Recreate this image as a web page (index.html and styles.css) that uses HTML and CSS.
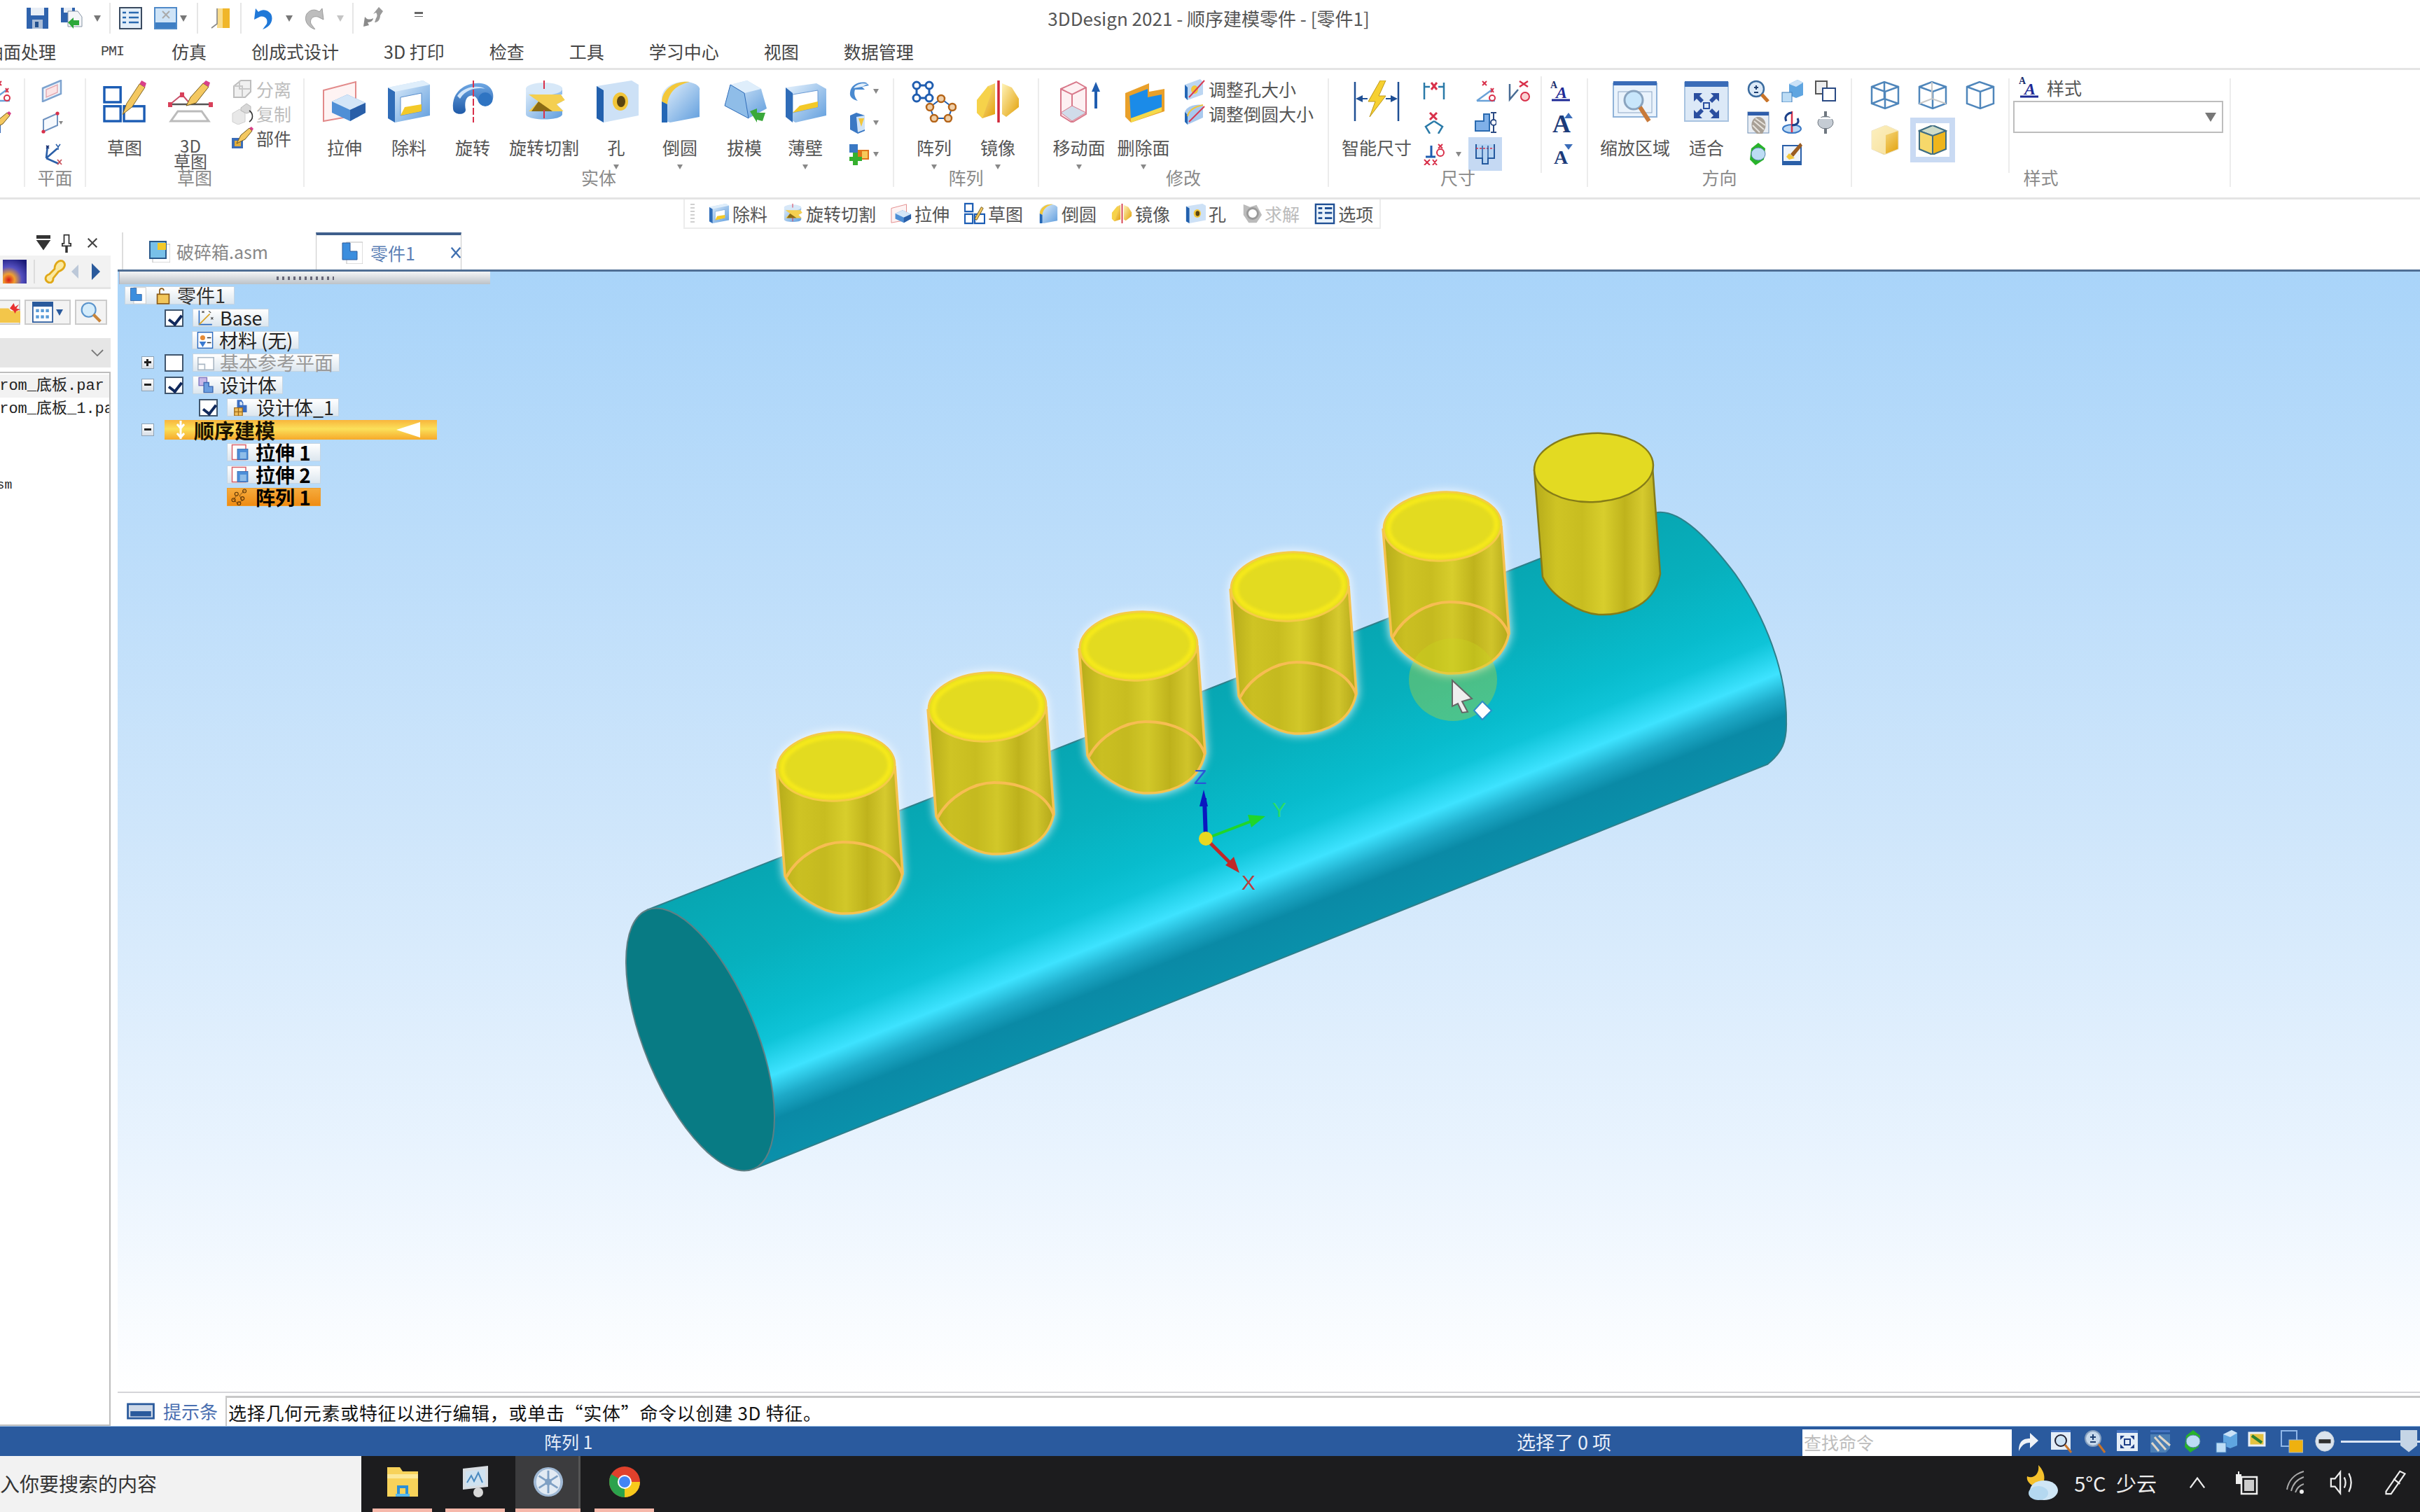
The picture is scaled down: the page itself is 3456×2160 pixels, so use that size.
FILE: index.html
```html
<!DOCTYPE html>
<html lang="zh-CN">
<head>
<meta charset="utf-8">
<title>3DDesign 2021</title>
<link rel="stylesheet" href="styles.css">
</head>
<body>
<svg class="sprite" aria-hidden="true">
<defs>
<linearGradient id="gb" x1="0" y1="0" x2="1" y2="1"><stop offset="0" stop-color="#e8f3fd"/><stop offset="1" stop-color="#5f9ddd"/></linearGradient>
<linearGradient id="gb2" x1="0" y1="0" x2="0" y2="1"><stop offset="0" stop-color="#6fa8e4"/><stop offset="1" stop-color="#1f5aa8"/></linearGradient>
<linearGradient id="gg" x1="0" y1="0" x2="1" y2="1"><stop offset="0" stop-color="#fff3b8"/><stop offset="1" stop-color="#e2a008"/></linearGradient>
<symbol id="i-sketch" viewBox="0 0 64 62"><g fill="none" stroke="#1b5cb4" stroke-width="3.5"><rect x="2" y="10" width="24" height="22"/><rect x="2" y="38" width="24" height="22"/><rect x="31" y="38" width="30" height="22"/></g><path d="M29 50 35 34 54 5 62 10 43 39z" fill="#f4c860" stroke="#7e621e"/><path d="M54 5 57 0 64 4 62 10z" fill="#d8408a"/></symbol>
<symbol id="i-sk3d" viewBox="0 0 64 60"><path d="M3 34 20 20 32 34z" fill="none" stroke="#c8506a" stroke-width="2"/><g fill="#d8405a"><rect x="0" y="31" width="6" height="7"/><rect x="17" y="17" width="6" height="7"/><rect x="58" y="31" width="6" height="7"/></g><path d="M6 34H58" stroke="#555" stroke-width="2.5"/><path d="M14 44H48L58 58H4z" fill="none" stroke="#bbb" stroke-width="3"/><path d="M26 36 32 24 50 4 58 9 40 32z" fill="#f4c860" stroke="#6e561a"/><path d="M50 4 54 0 60 3 58 9z" fill="#d8408a"/></symbol>
<symbol id="i-extrude" viewBox="0 0 64 60"><path d="M2 14 48 2V50L2 58z" fill="#fde8e8" fill-opacity=".5" stroke="#e28a8a" stroke-width="2"/><path d="M14 30 36 20 62 32V46L40 58 14 46z" fill="#4f8fd6"/><path d="M14 30 36 20 62 32 40 42z" fill="#d4e6f8"/><path d="M40 42 62 32V46L40 58z" fill="#2a5fa8"/></symbol>
<symbol id="i-cut" viewBox="0 0 64 60"><path d="M2 10 52 0 62 6V50L12 60 2 54z" fill="url(#gb)"/><path d="M2 10 12 16V60L2 54z" fill="#2f6cb8"/><path d="M12 16 62 6 52 0 2 10z" fill="#dfeefb"/><path d="M20 24 50 18V44L20 50z" fill="#fff" stroke="#5a8ecb"/><path d="M20 50 26 38 50 34V44z" fill="#f3c928"/></symbol>
<symbol id="i-rev" viewBox="0 0 64 60"><path d="M4 40C2 14 24 2 44 4 60 6 64 20 60 30 56 38 44 38 40 30 38 24 34 20 28 22 22 24 20 32 22 42 22 50 4 50 4 40z" fill="url(#gb2)"/><path d="M10 22C20 8 40 6 50 12 42 10 24 10 14 26z" fill="#d3e6fa"/><ellipse cx="50" cy="27" rx="10" ry="10" fill="#2f74c2"/><path d="M33 0V60" stroke="#d8304a" stroke-width="2" stroke-dasharray="10 3"/></symbol>
<symbol id="i-revcut" viewBox="0 0 64 60"><path d="M6 12C6 2 58 2 58 12V48C58 58 6 58 6 48z" fill="url(#gb)"/><ellipse cx="32" cy="12" rx="26" ry="9" fill="#d7e8f8"/><path d="M10 20H56L62 28 50 34 60 44H10L24 30z" fill="#f4cf50"/><path d="M24 30 44 44H14z" fill="#8a6b14"/><path d="M56 20 62 28 50 34 60 44H64V20z" fill="#fff"/><path d="M32 0V60" stroke="#d8304a" stroke-width="2" stroke-dasharray="12 30"/></symbol>
<symbol id="i-hole" viewBox="0 0 64 60"><path d="M4 8 54 0 64 6V50L14 60 4 54z" fill="#cde1f6"/><path d="M4 8 14 14V60L4 54z" fill="#2260ad"/><ellipse cx="38" cy="30" rx="11" ry="13" fill="#f2c63a"/><ellipse cx="39" cy="30" rx="6" ry="8" fill="#5a4410"/></symbol>
<symbol id="i-round" viewBox="0 0 64 60"><path d="M6 56V24C8 6 30 0 44 2 56 4 62 10 60 14V52L18 60z" fill="url(#gb)"/><path d="M6 30C8 8 30 0 46 2 28 6 16 16 14 34z" fill="#f3c83a"/><path d="M6 30 14 34V60H6z" fill="#2467b5"/></symbol>
<symbol id="i-draft" viewBox="0 0 64 60"><path d="M12 6 36 0 56 12 64 40 38 54 4 36z" fill="url(#gb)"/><path d="M12 6 36 0 56 12 32 18z" fill="#dfeefb"/><path d="M12 6 32 18 38 54 4 36z" fill="#8fbde8" stroke="#2f6cb8"/><path d="M40 44 50 40 50 46 62 46 58 58 50 56 50 60z" fill="#3aa83a"/></symbol>
<symbol id="i-thin" viewBox="0 0 64 60"><path d="M4 10 48 4 62 12V50L18 60 4 52z" fill="url(#gb)"/><path d="M14 20 50 14V38L14 46z" fill="#fff" stroke="#6a9ad4"/><path d="M14 46 24 36 50 30V38z" fill="#f3c928"/><path d="M4 10 14 18V60L4 52z" fill="#2f6cb8"/></symbol>
<symbol id="i-pattern" viewBox="0 0 64 60"><g fill="none" stroke="#1f5db0" stroke-width="3"><circle cx="7" cy="7" r="5"/><circle cx="25" cy="7" r="5"/><circle cx="7" cy="25" r="5"/><circle cx="25" cy="25" r="5"/><path d="M12 7H20M12 25H20M7 12V20M25 12V20"/></g><path d="M42 26 58 38 52 54H32L26 38z" fill="none" stroke="#1f5db0" stroke-width="2"/><g fill="#f0cfa8" stroke="#b46418" stroke-width="2.5"><circle cx="42" cy="26" r="5"/><circle cx="58" cy="38" r="5"/><circle cx="52" cy="54" r="5"/><circle cx="32" cy="54" r="5"/><circle cx="26" cy="38" r="5"/></g></symbol>
<symbol id="i-mirror" viewBox="0 0 64 60"><path d="M2 28 18 8 28 4V48L10 54 2 46z" fill="url(#gg)"/><path d="M38 4 52 10 62 26V38L44 52 38 48z" fill="url(#gg)"/><path d="M2 28 18 8 24 14 10 54 2 46z" fill="#f6d24a"/><path d="M33 0V60" stroke="#d02838" stroke-width="3.5"/></symbol>
<symbol id="i-moveface" viewBox="0 0 64 60"><path d="M6 12 28 2 42 10V48L22 60 6 50z" fill="#fdf0f2" stroke="#d8788a" stroke-width="2"/><path d="M6 12 22 20 42 10M22 20V60" fill="none" stroke="#d8788a" stroke-width="2"/><path d="M6 46 22 36 42 46 22 58z" fill="#d0dcea" stroke="#d8788a"/><path d="M56 2 62 16H58V40H54V16H50z" fill="#1f5db0"/></symbol>
<symbol id="i-delface" viewBox="0 0 64 60"><path d="M6 18 40 4V16L62 12V44L14 60 6 52z" fill="#e9a02a"/><path d="M12 22 38 12V24L58 20V40L14 54z" fill="#1b8be8"/><path d="M14 54 58 38V44L14 60z" fill="#f5d94a"/></symbol>
<symbol id="i-smart" viewBox="0 0 66 60"><path d="M2 2V58M64 2V58" stroke="#1f4f94" stroke-width="2.5"/><path d="M3 26 13 21V31zM63 26 53 21V31z" fill="#1f4f94"/><path d="M13 26H20M46 26H53" stroke="#1f4f94" stroke-width="2"/><path d="M38 0 21 30H31L23 52 46 22H36L46 0z" fill="#f6d030" stroke="#bc961a"/></symbol>
<symbol id="i-zoomarea" viewBox="0 0 64 60"><rect x="1" y="4" width="62" height="48" fill="#eaf3fc" stroke="#8fb2d8" stroke-width="2"/><rect x="1" y="1" width="62" height="6" fill="#3a6cb8"/><rect x="8" y="16" width="48" height="30" fill="none" stroke="#8ca6c4"/><circle cx="30" cy="28" r="13" fill="#c8e6fb" stroke="#8aa4bf" stroke-width="3"/><path d="M39 38 52 58" stroke="#c87a3a" stroke-width="6"/></symbol>
<symbol id="i-fit" viewBox="0 0 64 60"><rect x="1" y="3" width="62" height="55" fill="#dce9f7" stroke="#a8c3e0" stroke-width="2"/><rect x="1" y="1" width="62" height="8" fill="#3a6cb8"/><g fill="#2b4fa0"><path d="M14 18H26L22 22 28 28 24 32 18 26 14 30zM50 18H38L42 22 36 28 40 32 46 26 50 30zM14 54H26L22 50 28 44 24 40 18 46 14 42zM50 54H38L42 50 36 44 40 40 46 46 50 42z"/></g><rect x="28" y="32" width="8" height="8" fill="none" stroke="#2b4fa0" stroke-width="2"/></symbol>
<symbol id="s-split" viewBox="0 0 32 32"><path d="M4 12 14 4H28V20L20 28H4z" fill="#f0f0f0" stroke="#bdbdbd" stroke-width="2"/><path d="M12 4V16H28M4 12H16V28" fill="none" stroke="#c8c8c8" stroke-width="2"/></symbol>
<symbol id="s-copy" viewBox="0 0 32 32"><path d="M2 16 12 10 20 16V28L10 32 2 28z" fill="#e8e8e8" stroke="#cfcfcf"/><path d="M14 8 22 2 28 6V14L22 16 14 12z" fill="#d8d8d8" stroke="#b8b8b8"/><path d="M26 12C32 16 32 24 26 28" fill="none" stroke="#333" stroke-width="1.6"/></symbol>
<symbol id="s-part" viewBox="0 0 32 32"><rect x="1" y="16" width="16" height="15" fill="#3a6cb8"/><rect x="5" y="20" width="9" height="8" fill="#e2ad3a"/><path d="M8 24 14 12 26 2 30 6 20 18z" fill="#f4c860" stroke="#6e561a"/><path d="M26 2 29 0 32 3 30 6z" fill="#d8408a"/></symbol>
<symbol id="s-swoop" viewBox="0 0 32 32"><path d="M3 18C4 8 14 2 26 4L30 8 20 10 24 14 10 14C8 20 10 26 14 30 6 28 2 24 3 18z" fill="#4a8ad0"/><path d="M8 12C12 6 20 4 28 6L20 10z" fill="#e4f0fb"/></symbol>
<symbol id="s-rib" viewBox="0 0 32 32"><path d="M3 6 12 2 24 6V28L14 32 3 26z" fill="#3a78c4"/><path d="M12 8 24 6V26L14 30z" fill="#cfe3f7"/><path d="M15 10 23 10 19 22z" fill="#f2c63a"/></symbol>
<symbol id="s-add" viewBox="0 0 32 32"><rect x="2" y="2" width="12" height="12" fill="#3a78c4"/><path d="M14 10H30V24H14z" fill="#e0741c"/><rect x="20" y="12" width="8" height="10" fill="#f7c95a"/><path d="M7 14H14V20H20V26H14V32H7V26H2V20H7z" fill="#36b02e"/></symbol>
<symbol id="s-holesz" viewBox="0 0 32 32"><path d="M2 10 24 2 28 6V24L6 32 2 28z" fill="#bcd6f2"/><path d="M2 10 6 14V32L2 28z" fill="#2467b5"/><ellipse cx="16" cy="17" rx="5" ry="6" fill="#f2c63a"/><path d="M8 28 30 4" stroke="#d83a52" stroke-width="2"/></symbol>
<symbol id="s-roundsz" viewBox="0 0 32 32"><path d="M2 28V14C4 6 18 2 28 4V22L6 32z" fill="#a8c9ee"/><path d="M2 14 6 18V32L2 28z" fill="#2467b5"/><path d="M8 28 30 6" stroke="#d83a52" stroke-width="2"/><path d="M6 20C8 10 18 6 28 4" fill="none" stroke="#f2c63a" stroke-width="2"/></symbol>
<symbol id="pl-a" viewBox="0 0 32 32"><path d="M3 12 29 1V20L3 31z" fill="#eef4fb" stroke="#7ea3cf" stroke-width="2.5"/><path d="M8 14 24 7V18L8 25z" fill="#fbe4e6" stroke="#e3a8b0" stroke-width="1.4"/></symbol>
<symbol id="pl-b" viewBox="0 0 32 32"><path d="M4 12 24 3V20L4 29z" fill="#f6f9fd" stroke="#6f93c0" stroke-width="2"/><circle cx="4" cy="29" r="2.6" fill="#d8304a"/><circle cx="24" cy="3" r="2.6" fill="#d8304a"/><path d="M26 14H32L29 19z" fill="#888"/></symbol>
<symbol id="pl-c" viewBox="0 0 32 32"><path d="M8 22 10 4M8 22 24 8M8 22 26 30" stroke="#2a5fa8" stroke-width="2.6"/><path d="M8 4 12 8M12 4 8 8" stroke="#1c2f6e" stroke-width="1.6"/><path d="M22 2 25 6 28 2M25 6V10" fill="none" stroke="#2a5fa8" stroke-width="1.6"/><path d="M24 24 30 31M30 24 24 31" stroke="#c8505a" stroke-width="1.8"/></symbol>
<symbol id="d-a" viewBox="0 0 32 32"><path d="M2 4V28M30 4V28M2 10H10M22 10H30" fill="none" stroke="#2a7aa8" stroke-width="2.5"/><path d="M12 4 20 14M20 4 12 14" stroke="#d8304a" stroke-width="3"/></symbol>
<symbol id="d-b" viewBox="0 0 32 32"><path d="M4 30 26 14M4 30H30" fill="none" stroke="#6aa2d8" stroke-width="2.5"/><path d="M12 2 18 8M18 2 12 8M24 12 28 18M28 12 24 18" stroke="#d8304a" stroke-width="2"/><circle cx="26" cy="26" r="4" fill="none" stroke="#d8304a" stroke-width="2"/></symbol>
<symbol id="d-c" viewBox="0 0 32 32"><path d="M2 6V28L14 14" fill="none" stroke="#486b94" stroke-width="2.5"/><path d="M16 2 28 10M28 2 16 10" stroke="#d8304a" stroke-width="2.5"/><circle cx="24" cy="24" r="6" fill="#f9d3d3" stroke="#d8304a" stroke-width="2"/></symbol>
<symbol id="d-d" viewBox="0 0 32 32"><path d="M16 14 4 22 10 32M16 14 28 22 22 32" fill="none" stroke="#2a7aa8" stroke-width="2.5"/><path d="M10 2 20 12M20 2 10 12" stroke="#d8304a" stroke-width="3"/></symbol>
<symbol id="d-e" viewBox="0 0 32 32"><path d="M2 14H14V4H22V28H2z" fill="#7fb0e8" stroke="#2a6ab0" stroke-width="2"/><path d="M24 2H32M28 2V30M24 30H32" stroke="#2a4a84" stroke-width="2"/><circle cx="28" cy="16" r="4" fill="#fff" stroke="#2a4a84" stroke-width="2"/></symbol>
<symbol id="d-f" viewBox="0 0 32 32"><path d="M4 20H18M12 4V20" stroke="#1f5db0" stroke-width="3"/><path d="M2 24 10 32M10 24 2 32M14 24 20 32M20 24 14 32" stroke="#d8304a" stroke-width="2"/><circle cx="25" cy="14" r="5" fill="none" stroke="#d8304a" stroke-width="2"/><path d="M22 2 28 8M28 2 22 8" stroke="#d8304a" stroke-width="2"/></symbol>
<symbol id="d-g" viewBox="0 0 32 32"><path d="M3 2V22H12V30H20V22H29V2" fill="#b5d3f2" stroke="#24599e" stroke-width="2"/><path d="M3 8H29" stroke="#d8304a" stroke-width="1.6" stroke-dasharray="3 2"/><path d="M12 4V22M20 4V22" stroke="#24599e" stroke-width="1.5"/></symbol>
<symbol id="t-a1" viewBox="0 0 32 32"><text x="0" y="12" class="glyph gs">A</text><text x="8" y="26" class="glyph gb bi">A</text><path d="M2 29H28" stroke="#1e2a96" stroke-width="3"/></symbol>
<symbol id="t-a2" viewBox="0 0 32 32"><text x="3" y="30" class="glyph gl">A</text><path d="M20 10 26 2 32 10z" fill="#3a6cb8"/></symbol>
<symbol id="t-a3" viewBox="0 0 32 32"><text x="5" y="30" class="glyph gm">A</text><path d="M20 2H32L26 10z" fill="#3a6cb8"/></symbol>
<symbol id="o-zoom" viewBox="0 0 32 32"><circle cx="13" cy="13" r="11" fill="#dbe9f7" stroke="#3a6b9f" stroke-width="2.5"/><path d="M10 11H16M13 8V14M10 18H16" stroke="#1e3f70" stroke-width="2"/><path d="M21 21 30 31" stroke="#c8742a" stroke-width="5"/></symbol>
<symbol id="o-cube" viewBox="0 0 32 32"><path d="M12 6 24 0 32 4V22L22 26 12 22z" fill="#5fa5e0"/><path d="M12 6 24 0 32 4 22 10z" fill="#cbe2f7"/><rect x="2" y="18" width="14" height="14" fill="#bcdcf5" stroke="#3a7ab8"/></symbol>
<symbol id="o-win" viewBox="0 0 32 32"><rect x="2" y="2" width="16" height="18" fill="#eee" stroke="#555" stroke-width="2"/><rect x="12" y="12" width="18" height="18" fill="#fff" stroke="#2a4a84" stroke-width="2"/></symbol>
<symbol id="o-pan" viewBox="0 0 32 32"><rect x="1" y="1" width="30" height="30" fill="#e9eef4" stroke="#6e8fb4" stroke-width="1"/><rect x="1" y="1" width="30" height="5" fill="#2f5eab"/><path d="M8 26C4 18 8 8 16 8S28 16 26 24L22 32H14z" fill="#a8a096"/><path d="M10 14 24 26M12 10 26 20M8 20 18 30" stroke="#e7e3dc" stroke-width="2"/></symbol>
<symbol id="o-rot" viewBox="0 0 32 32"><ellipse cx="16" cy="25" rx="13" ry="6" fill="#bcd9f5" stroke="#3a78c4" stroke-width="2"/><path d="M16 0V30" stroke="#d8304a" stroke-width="2.5"/><path d="M8 14C4 6 12 2 16 2M24 10C28 18 20 20 16 20" fill="none" stroke="#1b3f88" stroke-width="3"/></symbol>
<symbol id="o-view" viewBox="0 0 32 32"><ellipse cx="16" cy="16" rx="11" ry="9" fill="#c5ccd4" stroke="#6f7780"/><path d="M16 0V8M16 24V32" stroke="#6f7780" stroke-width="4"/><path d="M5 10 27 10" stroke="#fff" stroke-width="2"/></symbol>
<symbol id="o-spin" viewBox="0 0 32 32"><path d="M16 0 26 8 24 24 12 32 4 24 6 8z" fill="#28b32a"/><ellipse cx="16" cy="16" rx="10" ry="9" fill="#bcdcf4" stroke="#5784aa"/></symbol>
<symbol id="o-brush" viewBox="0 0 32 32"><rect x="3" y="4" width="26" height="27" fill="#eef4fb" stroke="#2a5fa8" stroke-width="2"/><rect x="3" y="26" width="26" height="5" fill="#2a5fa8"/><path d="M28 0 14 16 18 20 31 4z" fill="#9a5c22"/><path d="M12 15 20 22 12 24 8 20z" fill="#f2c63a"/></symbol>
<symbol id="v-a" viewBox="0 0 42 40"><g fill="none" stroke="#4f86bb" stroke-width="2.5"><path d="M2 8 20 1 40 8V32L21 39 2 32z"/><path d="M2 8 21 15 40 8M21 15V39M2 32 20 25 40 32M20 1V25"/></g></symbol>
<symbol id="v-b" viewBox="0 0 42 40"><g fill="none" stroke="#4f86bb" stroke-width="2.5"><path d="M2 8 20 1 40 8V32L21 39 2 32z"/><path d="M2 8 21 15 40 8M21 15V39"/></g><path d="M2 32 20 25 40 32M20 1V25" fill="none" stroke="#c8c8c8" stroke-width="2"/></symbol>
<symbol id="v-c" viewBox="0 0 42 40"><g fill="none" stroke="#4f86bb" stroke-width="2.5"><path d="M2 8 20 1 40 8V32L21 39 2 32z"/><path d="M2 8 21 15 40 8M21 15V39"/></g></symbol>
<symbol id="v-d" viewBox="0 0 42 42"><path d="M2 8 22 0 40 8V34L20 42 2 34z" fill="url(#gg)" stroke="#e8e0c8"/><path d="M2 8 22 0 40 8 22 14 22 42 2 34z" fill="#fbefc0" fill-opacity=".8"/></symbol>
<symbol id="v-e" viewBox="0 0 42 42"><path d="M2 8 21 0 40 8V34L21 42 2 34z" fill="#eeb51c" stroke="#3f6e84" stroke-width="2"/><path d="M2 8 21 0 40 8 21 15z" fill="#cfdcc8" stroke="#3f6e84" stroke-width="2"/><path d="M2 8 21 15V42L2 34z" fill="#f6d86a" stroke="#3f6e84" stroke-width="2"/></symbol>
<symbol id="k-style" viewBox="0 0 32 32"><text x="0" y="11" class="glyph gs">A</text><text x="8" y="26" class="glyph gb bi">A</text><path d="M2 29H28" stroke="#1e2a96" stroke-width="3"/></symbol>
<symbol id="m-sketch" viewBox="0 0 32 32"><g fill="none" stroke="#1b5cb4" stroke-width="2.4"><rect x="1" y="1" width="12" height="12"/><rect x="1" y="17" width="12" height="14"/><rect x="16" y="17" width="15" height="14"/></g><path d="M16 24 26 6 29 8 19 26z" fill="#f4c860" stroke="#6e561a"/></symbol>
<symbol id="m-opt" viewBox="0 0 32 32"><rect x="2" y="2" width="28" height="29" fill="#eaf3fb" stroke="#1f4f94" stroke-width="2.5"/><path d="M6 8H12M16 8H27M6 15H12M16 15H27M6 23H12M16 23H27" stroke="#1f4f94" stroke-width="3"/></symbol>
<symbol id="m-solve" viewBox="0 0 32 32"><path d="M4 2 14 6 24 3 32 18 24 30 12 30 4 18z" fill="#bbb"/><circle cx="18" cy="16" r="8" fill="#fff" stroke="#999" stroke-width="3"/></symbol>
<symbol id="q-save" viewBox="0 0 33 32"><path d="M1 1H32V31H1z" fill="#2f63ad"/><rect x="7" y="1" width="19" height="11" fill="#e8eef6"/><rect x="9" y="18" width="15" height="13" fill="#a9bcd6"/><rect x="13" y="21" width="5" height="8" fill="#24528f"/></symbol>
<symbol id="q-saveas" viewBox="0 0 33 32"><path d="M2 1H22V22H2z" fill="#2f63ad"/><rect x="6" y="1" width="12" height="7" fill="#e8eef6"/><path d="M12 6H26L32 14V28H12z" fill="#f4f6f8" stroke="#8795a6"/><path d="M12 22 20 15V19H28V26H20V31z" fill="#2da83a"/></symbol>
<symbol id="q-list" viewBox="0 0 33 32"><rect x="1" y="1" width="31" height="30" fill="#e3eef8" stroke="#3a4a60" stroke-width="2"/><path d="M5 8H10M14 8H28M5 15H10M14 15H28M5 22H10M14 22H28" stroke="#2a6ab0" stroke-width="2.4"/></symbol>
<symbol id="q-prop" viewBox="0 0 33 32"><rect x="1" y="1" width="31" height="30" fill="#cfe4f7" stroke="#4f8ac8" stroke-width="2"/><rect x="2" y="22" width="29" height="8" fill="#3f7fc4"/><path d="M12 6 22 16M22 6 12 16" stroke="#aaa" stroke-width="2"/></symbol>
<symbol id="q-book" viewBox="0 0 30 32"><path d="M10 2H28V30H10z" fill="#f0b62a"/><path d="M10 2H18V30H10z" fill="#f9dc8b"/><path d="M10 2V24L2 30" fill="none" stroke="#888" stroke-width="1.6"/></symbol>
<symbol id="q-undo" viewBox="0 0 33 32"><path d="M6 2 4 18 12 14C20 12 24 18 22 24L16 32C28 28 32 18 28 10 24 4 16 2 10 7z" fill="#1f78d8"/></symbol>
<symbol id="q-redo" viewBox="0 0 33 32"><path d="M27 2 29 18 21 14C13 12 9 18 11 24L17 32C5 28 1 18 5 10 9 4 17 2 23 7z" fill="#bdbdbd" stroke="#9a9a9a"/></symbol>
<symbol id="q-arrows" viewBox="0 0 33 32"><path d="M24 0 30 6 26 12C26 16 24 22 18 22L20 16C22 14 22 10 20 8L16 10z" fill="#9a9a9a"/><path d="M4 14 2 28 10 26 8 22C14 22 16 18 16 16 12 18 8 18 6 16z" fill="#8a8a8a"/></symbol>
<symbol id="f-asm" viewBox="0 0 30 32"><rect x="5" y="6" width="25" height="26" fill="#fff" stroke="#b7b7b7"/><rect x="1" y="2" width="23" height="24" fill="#78c0e8" stroke="#2a5a8c" stroke-width="2"/><path d="M12 4H24V14H12z" fill="#f3c928"/></symbol>
<symbol id="f-par" viewBox="0 0 30 32"><rect x="7" y="1" width="23" height="31" fill="#fff" stroke="#bcbcbc"/><path d="M1 2H12V14H22V26H1z" fill="#3c8ede" stroke="#2a5a9c"/></symbol>
<symbol id="t-base" viewBox="0 0 30 30"><path d="M3 28V2M3 27H26" stroke="#2a6ac0" stroke-width="2"/><path d="M3 27 22 8" stroke="#d8a020" stroke-width="2"/><path d="M8 3 12 6M12 3 8 6M20 3 24 6M24 14 28 18M28 14 24 18" stroke="#444" stroke-width="1.4"/></symbol>
<symbol id="t-mat" viewBox="0 0 32 34"><rect x="1" y="1" width="30" height="32" fill="#fff" stroke="#2a6ac0" stroke-width="2"/><circle cx="11" cy="12" r="5" fill="#e58a36"/><path d="M4 20H18L11 31z" fill="#3a7ad0"/><path d="M20 12H28M20 22H28" stroke="#333" stroke-width="2"/></symbol>
<symbol id="t-plane" viewBox="0 0 32 30"><path d="M2 6H30V28H2z" fill="#fff" stroke="#aab7c4" stroke-width="2"/><path d="M2 18H14V28" fill="none" stroke="#aab7c4" stroke-width="2"/></symbol>
<symbol id="t-body" viewBox="0 0 32 34"><rect x="2" y="2" width="16" height="16" fill="#c8b8e8" stroke="#7d76c0" stroke-width="2"/><path d="M12 12H22V20H30V32H12z" fill="#6b9ee0" stroke="#3a66b0" stroke-width="2"/></symbol>
<symbol id="t-body1" viewBox="0 0 30 38"><path d="M8 2H18L22 8V14H30V30H8z" fill="#3a6cc0"/><path d="M14 6H18L20 10V14H14z" fill="#dbe8f6"/><rect x="2" y="20" width="18" height="18" fill="#f0c060" stroke="#a06a18" stroke-width="2"/><path d="M2 29H20M11 20V38" stroke="#a06a18" stroke-width="2"/></symbol>
<symbol id="t-feat" viewBox="0 0 32 32"><rect x="2" y="2" width="26" height="28" fill="#fff" stroke="#d8606a" stroke-width="2"/><rect x="12" y="10" width="20" height="20" fill="#4c8ed8" stroke="#2a5fa8"/><rect x="17" y="16" width="12" height="12" fill="#8fbde8"/></symbol>
<symbol id="t-pat" viewBox="0 0 32 34"><path d="M26 4 16 14 22 24 12 30 4 22 10 14" fill="none" stroke="#7a4a10" stroke-width="1.6" stroke-dasharray="2 1"/><g fill="none" stroke="#5c3608" stroke-width="1.6"><circle cx="26" cy="5" r="3.5"/><circle cx="10" cy="11" r="3.5"/><circle cx="4" cy="23" r="3.5"/><circle cx="15" cy="30" r="3.5"/><circle cx="22" cy="20" r="3.5"/></g></symbol>
<symbol id="b-arrow" viewBox="0 0 32 32"><path d="M2 30C2 16 8 12 18 12V4L30 15 18 26V18C10 18 6 22 2 30z" fill="#fff" fill-opacity=".92"/></symbol>
<symbol id="b-zoomarea" viewBox="0 0 32 32"><rect x="1" y="2" width="28" height="26" fill="#e4edf7"/><rect x="1" y="0" width="28" height="3" fill="#4473c0"/><circle cx="15" cy="15" r="8" fill="#cde3f5" stroke="#223" stroke-width="2"/><path d="M21 21 30 32" stroke="#c8742a" stroke-width="3"/></symbol>
<symbol id="b-zoom" viewBox="0 0 32 32"><circle cx="14" cy="12" r="11" fill="#c6d8ea" stroke="#86a0bf" stroke-width="2"/><path d="M10 10H18M14 6V14M10 17H18" stroke="#1e3f70" stroke-width="2"/><path d="M22 20 31 32" stroke="#c8742a" stroke-width="3"/></symbol>
<symbol id="b-fit" viewBox="0 0 32 32"><rect x="1" y="4" width="30" height="26" fill="#e4edf7"/><rect x="1" y="0" width="30" height="4" fill="#4473c0"/><path d="M6 8H12L6 14zM26 8H20L26 14zM6 26H12L6 20zM26 26H20L26 20z" fill="#1e3f88"/><rect x="12" y="13" width="8" height="8" fill="none" stroke="#1e3f88" stroke-width="2"/></symbol>
<symbol id="b-shade" viewBox="0 0 32 32"><path d="M2 6H30V26L24 32H2z" fill="#4c7fb5"/><rect x="2" y="0" width="28" height="3" fill="#4473c0"/><path d="M8 10 24 28M14 8 30 22M4 18 14 30" stroke="#ded6c8" stroke-width="3"/></symbol>
<symbol id="b-box" viewBox="0 0 32 32"><path d="M2 4H24V22H2z" fill="#e4c240" stroke="#e9f0f8" stroke-width="3"/><path d="M6 8 20 18" stroke="#2a8030" stroke-width="4"/></symbol>
<symbol id="b-tile" viewBox="0 0 32 32"><rect x="1" y="1" width="22" height="22" fill="none" stroke="#8fb6e8" stroke-width="2"/><rect x="12" y="14" width="20" height="18" fill="#efb10f" stroke="#9db8d8"/></symbol>
<symbol id="b-minus" viewBox="0 0 32 36"><ellipse cx="16" cy="18" rx="14" ry="15" fill="#dbe3ec" stroke="#c0ccd8"/><rect x="7" y="15" width="18" height="6" fill="#2e2e2e"/></symbol>
<symbol id="b-prompt" viewBox="0 0 40 26"><rect x="0" y="2" width="40" height="22" fill="#cfd9e8" stroke="#2a5a9c" stroke-width="3"/><rect x="4" y="13" width="32" height="8" fill="#2a5a9c"/></symbol>
<symbol id="w-folder" viewBox="0 0 44 46"><path d="M0 2H18L22 8H44V44H0z" fill="#f7d25a"/><path d="M0 12H44V18H0z" fill="#fbe89a"/><path d="M14 40V28H30V40H26V32H18V40z" fill="#2b8fd8"/><path d="M12 44H32V40H12z" fill="#58b9ec"/></symbol>
<symbol id="w-mon" viewBox="0 0 44 46"><path d="M4 4 40 0V30L4 34z" fill="#d8dde2"/><path d="M8 8 36 5V27L8 30z" fill="#cfe2f0"/><path d="M10 24 16 14 20 22 26 10 32 24" fill="none" stroke="#4a8ac0" stroke-width="2"/><circle cx="26" cy="38" r="7" fill="#d8d8d8"/></symbol>
<symbol id="w-snow" viewBox="0 0 48 46"><ellipse cx="24" cy="23" rx="22" ry="22" fill="#9fb8d4"/><ellipse cx="24" cy="23" rx="18" ry="19" fill="#e2eaf3"/><path d="M24 6V40M10 14 38 32M38 14 10 32" stroke="#7fa0c4" stroke-width="3"/><ellipse cx="24" cy="23" rx="5" ry="5" fill="#7fa0c4"/></symbol>
<symbol id="w-chrome" viewBox="0 0 46 46"><circle cx="23" cy="23" r="22" fill="#e0412c"/><path d="M23 23 4 12A22 22 0 0 0 23 45z" fill="#2ba24c"/><path d="M23 23H45A22 22 0 0 1 23 45z" fill="#f8c91c"/><circle cx="23" cy="23" r="10" fill="#fff"/><circle cx="23" cy="23" r="8" fill="#4285f4"/></symbol>
<symbol id="w-weather" viewBox="0 0 48 54"><path d="M18 2C30 14 28 28 20 34 10 34 0 26 2 18 10 22 20 16 18 2z" fill="#f4c02c"/><ellipse cx="26" cy="38" rx="20" ry="14" fill="#cfe6f6"/><ellipse cx="18" cy="42" rx="14" ry="10" fill="#b4d8f0"/></symbol>
<symbol id="w-bat" viewBox="0 0 34 36"><path d="M6 2V10" stroke="#eee" stroke-width="2"/><rect x="2" y="6" width="8" height="14" fill="#eee"/><rect x="10" y="10" width="22" height="24" fill="none" stroke="#eee" stroke-width="2.5"/><rect x="14" y="14" width="14" height="16" fill="#ccc"/></symbol>
<symbol id="w-wifi" viewBox="0 0 28 36"><g fill="none" stroke="#aaa" stroke-width="2"><path d="M2 28C4 16 12 6 26 2"/><path d="M8 30C10 22 14 14 26 10"/><path d="M14 32C16 26 20 22 26 20"/></g><circle cx="23" cy="31" r="3" fill="#eee"/></symbol>
<symbol id="w-vol" viewBox="0 0 36 36"><path d="M2 12H8L16 2V34L8 24H2z" fill="none" stroke="#eee" stroke-width="2.4"/><path d="M22 10C25 16 25 20 22 26M29 4C34 14 34 22 29 32" fill="none" stroke="#eee" stroke-width="2.4"/></symbol>
<symbol id="w-pen" viewBox="0 0 34 40"><path d="M2 34 24 2 32 6 10 38 2 38z" fill="none" stroke="#eee" stroke-width="2.4"/><path d="M14 14 24 22" stroke="#eee" stroke-width="2.4"/></symbol>
<symbol id="p-heat" viewBox="0 0 34 34"><defs><radialGradient id="ht" cx=".25" cy=".85" r="1"><stop offset="0" stop-color="#d81818"/><stop offset=".25" stop-color="#f0a030"/><stop offset=".55" stop-color="#5550c0"/><stop offset="1" stop-color="#1a1a78"/></radialGradient></defs><rect width="34" height="34" fill="url(#ht)"/></symbol>
<symbol id="p-key" viewBox="0 0 34 36"><path d="M8 34C2 30 4 24 10 22L18 14C18 6 24 0 30 2 36 6 34 14 24 18L16 28C16 34 12 36 8 34z" fill="#fbe9a0" stroke="#e0a818" stroke-width="3"/></symbol>
<symbol id="p-folder" viewBox="0 0 32 32"><path d="M0 10H14L18 14H32V32H0z" fill="#f3c64a"/><path d="M22 2 24 8 30 4 26 10 32 12 26 14 24 18 22 14 16 10z" fill="#e83030"/></symbol>
<symbol id="p-grid" viewBox="0 0 34 34"><rect x="1" y="1" width="32" height="32" fill="#fff" stroke="#2a5a9c" stroke-width="2"/><rect x="1" y="1" width="32" height="7" fill="#2a5a9c"/><g fill="#5a9cd8"><rect x="6" y="12" width="5" height="5"/><rect x="14" y="12" width="5" height="5"/><rect x="22" y="12" width="5" height="5"/><rect x="6" y="22" width="5" height="5"/><rect x="14" y="22" width="5" height="5"/><rect x="22" y="22" width="5" height="5"/></g></symbol>
<symbol id="p-search" viewBox="0 0 36 36"><circle cx="14" cy="14" r="12" fill="#d4ecfb" stroke="#5a94cc" stroke-width="2.5"/><path d="M22 22 34 34" stroke="#c8843a" stroke-width="5"/></symbol>
</defs>
</svg>

<header class="titlebar">
  <svg class="q q33"><use href="#q-save"/></svg>
  <svg class="q q33 sp15"><use href="#q-saveas"/></svg><i class="tri"></i>
  <i class="qsep"></i>
  <svg class="q q33"><use href="#q-list"/></svg>
  <svg class="q q33 sp17"><use href="#q-prop"/></svg><i class="tri t4"></i>
  <i class="qsep q14"></i>
  <svg class="q q30"><use href="#q-book"/></svg>
  <i class="qsep q13"></i>
  <svg class="q q33 sp2"><use href="#q-undo"/></svg><i class="tri"></i>
  <svg class="q q33 sp15"><use href="#q-redo"/></svg><i class="tri light"></i>
  <i class="qsep"></i>
  <svg class="q q33"><use href="#q-arrows"/></svg>
  <i class="custom"></i>
  <div class="apptitle">3DDesign 2021 - 顺序建模零件 - [零件1]</div>
</header>

<nav class="menubar">
  <span class="clip">曲面处理</span><span class="pmi">PMI</span><span>仿真</span><span>创成式设计</span><span>3D 打印</span><span>检查</span><span>工具</span><span>学习中心</span><span>视图</span><span>数据管理</span>
</nav>

<section class="ribbon">
  <div class="group g0">
    <div class="gbody">
      <div class="col clipcol"><svg class="sm"><use href="#d-b"/></svg><svg class="sm"><use href="#s-part"/></svg></div>
    </div>
  </div>
  <div class="group g1">
    <div class="gbody">
      <div class="col"><svg class="sm"><use href="#pl-a"/></svg><svg class="sm"><use href="#pl-b"/></svg><svg class="sm"><use href="#pl-c"/></svg></div>
    </div>
    <div class="glabel">平面</div>
  </div>
  <div class="group g2">
    <div class="gbody">
      <div class="btn w92"><svg class="lg"><use href="#i-sketch"/></svg><span>草图</span></div>
      <div class="btn w96"><svg class="lg"><use href="#i-sk3d"/></svg><span class="two">3D<br>草图</span></div>
      <div class="tcol ml10">
        <div class="trow off"><svg class="sm"><use href="#s-split"/></svg><span>分离</span></div>
        <div class="trow off"><svg class="sm"><use href="#s-copy"/></svg><span>复制</span></div>
        <div class="trow"><svg class="sm"><use href="#s-part"/></svg><span>部件</span></div>
      </div>
    </div>
    <div class="glabel">草图</div>
  </div>
  <div class="group g3">
    <div class="gbody">
      <div class="btn w92"><svg class="lg"><use href="#i-extrude"/></svg><span>拉伸</span></div>
      <div class="btn w92"><svg class="lg"><use href="#i-cut"/></svg><span>除料</span></div>
      <div class="btn w90"><svg class="lg"><use href="#i-rev"/></svg><span>旋转</span></div>
      <div class="btn w114"><svg class="lg"><use href="#i-revcut"/></svg><span>旋转切割</span></div>
      <div class="btn w92"><svg class="lg"><use href="#i-hole"/></svg><span>孔</span><i class="drop"></i></div>
      <div class="btn w90"><svg class="lg"><use href="#i-round"/></svg><span>倒圆</span><i class="drop"></i></div>
      <div class="btn w94"><svg class="lg"><use href="#i-draft"/></svg><span>拔模</span></div>
      <div class="btn w80"><svg class="lg"><use href="#i-thin"/></svg><span>薄壁</span><i class="drop"></i></div>
      <div class="col ml21">
        <div class="srow"><svg class="sm"><use href="#s-swoop"/></svg><i class="tri"></i></div>
        <div class="srow"><svg class="sm"><use href="#s-rib"/></svg><i class="tri"></i></div>
        <div class="srow"><svg class="sm"><use href="#s-add"/></svg><i class="tri"></i></div>
      </div>
    </div>
    <div class="glabel">实体</div>
  </div>
  <div class="group g4">
    <div class="gbody">
      <div class="btn w92"><svg class="lg"><use href="#i-pattern"/></svg><span>阵列</span><i class="drop"></i></div>
      <div class="btn w90"><svg class="lg"><use href="#i-mirror"/></svg><span>镜像</span><i class="drop"></i></div>
    </div>
    <div class="glabel">阵列</div>
  </div>
  <div class="group g5">
    <div class="gbody">
      <div class="btn w92"><svg class="lg"><use href="#i-moveface"/></svg><span>移动面</span><i class="drop"></i></div>
      <div class="btn w92"><svg class="lg"><use href="#i-delface"/></svg><span>删除面</span><i class="drop"></i></div>
      <div class="tcol ml11">
        <div class="trow"><svg class="sm"><use href="#s-holesz"/></svg><span>调整孔大小</span></div>
        <div class="trow"><svg class="sm"><use href="#s-roundsz"/></svg><span>调整倒圆大小</span></div>
      </div>
    </div>
    <div class="glabel">修改</div>
  </div>
  <div class="group g6">
    <div class="gbody">
      <div class="btn w130"><svg class="lgw"><use href="#i-smart"/></svg><span>智能尺寸</span></div>
      <div class="col ml1"><svg class="sm"><use href="#d-a"/></svg><svg class="sm"><use href="#d-d"/></svg><div class="srow"><svg class="sm"><use href="#d-f"/></svg><i class="tri far"></i></div></div>
      <div class="col ml41"><svg class="sm"><use href="#d-b"/></svg><svg class="sm"><use href="#d-e"/></svg><svg class="sm hi"><use href="#d-g"/></svg></div>
      <div class="col ml17"><svg class="sm"><use href="#d-c"/></svg></div>
      <div class="col sepcol"><svg class="sm"><use href="#t-a1"/></svg><svg class="sm"><use href="#t-a2"/></svg><svg class="sm"><use href="#t-a3"/></svg></div>
    </div>
    <div class="glabel">尺寸</div>
  </div>
  <div class="group g7">
    <div class="gbody">
      <div class="btn w120"><svg class="lg"><use href="#i-zoomarea"/></svg><span>缩放区域</span></div>
      <div class="btn w84"><svg class="lg"><use href="#i-fit"/></svg><span>适合</span></div>
      <div class="col ml16"><svg class="sm"><use href="#o-zoom"/></svg><svg class="sm"><use href="#o-pan"/></svg><svg class="sm"><use href="#o-spin"/></svg></div>
      <div class="col ml16"><svg class="sm"><use href="#o-cube"/></svg><svg class="sm"><use href="#o-rot"/></svg><svg class="sm"><use href="#o-brush"/></svg></div>
      <div class="col ml16"><svg class="sm"><use href="#o-win"/></svg><svg class="sm"><use href="#o-view"/></svg></div>
    </div>
    <div class="glabel">方向</div>
  </div>
  <div class="group g8">
    <div class="gbody">
      <div class="vgrid">
        <svg class="vi"><use href="#v-a"/></svg><svg class="vi"><use href="#v-b"/></svg><svg class="vi"><use href="#v-c"/></svg>
        <svg class="vi"><use href="#v-d"/></svg><svg class="vi vsel"><use href="#v-e"/></svg>
      </div>
      <div class="stylecol">
        <div class="stylehead"><svg class="sm"><use href="#k-style"/></svg><span>样式</span></div>
        <div class="stylebox"><i class="tri big"></i></div>
      </div>
    </div>
    <div class="glabel">样式</div>
  </div>
</section>

<div class="minirow">
  <div class="mini">
    <i class="grip"></i>
    <div class="mi"><svg class="mic"><use href="#i-cut"/></svg><span>除料</span></div>
    <div class="mi"><svg class="mic"><use href="#i-revcut"/></svg><span>旋转切割</span></div>
    <div class="mi"><svg class="mic"><use href="#i-extrude"/></svg><span>拉伸</span></div>
    <div class="mi"><svg class="mic"><use href="#m-sketch"/></svg><span>草图</span></div>
    <div class="mi"><svg class="mic"><use href="#i-round"/></svg><span>倒圆</span></div>
    <div class="mi"><svg class="mic"><use href="#i-mirror"/></svg><span>镜像</span></div>
    <div class="mi"><svg class="mic"><use href="#i-hole"/></svg><span>孔</span></div>
    <div class="mi off"><svg class="mic"><use href="#m-solve"/></svg><span>求解</span></div>
    <div class="mi"><svg class="mic"><use href="#m-opt"/></svg><span>选项</span></div>
  </div>
</div>

<main class="main">
  <aside class="panel">
    <div class="phead">
      <i class="pdown"></i>
      <svg class="ppin" viewBox="0 0 16 30"><path d="M4 2H12V16H15V20H9V30H7V20H1V16H4z" fill="none" stroke="#333" stroke-width="2"/></svg>
      <svg class="px" viewBox="0 0 20 20"><path d="M3 3 17 17M17 3 3 17" stroke="#444" stroke-width="2.4"/></svg>
    </div>
    <div class="ptools">
      <svg class="pic"><use href="#p-heat"/></svg>
      <i class="pvsep"></i>
      <svg class="pic"><use href="#p-key"/></svg>
      <i class="arrow-l"></i>
      <i class="arrow-r"></i>
    </div>
    <div class="ptools2">
      <div class="pbtn cut"><svg class="pic2"><use href="#p-folder"/></svg></div>
      <div class="pbtn wide"><svg class="pic2"><use href="#p-grid"/></svg><i class="tri blue"></i></div>
      <div class="pbtn"><svg class="pic2"><use href="#p-search"/></svg></div>
    </div>
    <div class="pdrop"><svg class="chev" viewBox="0 0 20 12"><path d="M1 1 10 10 19 1" fill="none" stroke="#777" stroke-width="2"/></svg></div>
    <div class="plist">
      <div class="fileitem hot">From_底板.par</div>
      <div class="fileitem">From_底板_1.par</div>
      <div class="fileitem asm">.asm</div>
    </div>
  </aside>

  <div class="work">
    <div class="tabs">
      <div class="tab"><svg class="tic"><use href="#f-asm"/></svg><span>破碎箱.asm</span></div>
      <div class="tab active"><svg class="tic"><use href="#f-par"/></svg><span>零件1</span><svg class="tx" viewBox="0 0 20 20"><path d="M3 2 17 18M17 2 3 18" stroke="#3f6fb0" stroke-width="2.6"/></svg></div>
    </div>
    <div class="view">
      <svg class="scene" viewBox="168 388 3288 1600" role="img" aria-label="3D 模型">
        <defs>
          <linearGradient id="gBody" gradientUnits="userSpaceOnUse" x1="1000" y1="1270" x2="1147" y2="1638">
            <stop offset="0" stop-color="#07a6b2"/><stop offset=".28" stop-color="#07b0bd"/><stop offset=".5" stop-color="#08bccd"/><stop offset=".6" stop-color="#0fc4d8"/><stop offset=".72" stop-color="#3ee3ff"/><stop offset=".8" stop-color="#1eaac8"/><stop offset=".87" stop-color="#0a8aa6"/><stop offset="1" stop-color="#0a90aa"/>
          </linearGradient>
          <linearGradient id="gPin" x1="0" y1="0" x2="1" y2="0">
            <stop offset="0" stop-color="#b5aa1a"/><stop offset=".18" stop-color="#cfc424"/><stop offset=".38" stop-color="#c8bd20"/><stop offset=".55" stop-color="#d8ce2c"/><stop offset=".72" stop-color="#bfb31c"/><stop offset=".86" stop-color="#d6ca2e"/><stop offset="1" stop-color="#b3a71a"/>
          </linearGradient>
          <g id="pinShape">
            <path d="M-85 3-73 156C-60 185-20 208 7 210 30 211 85 205 95 152L84-1Z" fill="url(#gPin)"/>
          </g>
          <g id="pinLit">
            <use href="#pinShape"/>
            <path d="M-71 158C-55 128-20 108 10 108 50 108 85 125 95 155 85 205 30 211 7 210-20 208-60 185-71 158Z" fill="#b9ae1a" fill-opacity=".18"/>
            <path d="M-85 3-73 156C-60 185-20 208 7 210 30 211 85 205 95 152L84-1" fill="none" stroke="#f6c24e" stroke-width="3.5"/>
            <path d="M-71 158C-55 128-20 108 10 108 50 108 85 125 95 155" fill="none" stroke="#f7bd52" stroke-width="4"/>
            <ellipse rx="84" ry="49" transform="rotate(-3)" fill="#e3db20" stroke="#f5c84a" stroke-width="3"/>
            <ellipse class="soft" rx="77" ry="43" transform="rotate(-3)" fill="none" stroke="#fff018" stroke-width="6"/>
          </g>
        </defs>
        <path d="M924 1300 2367 732C2400 728 2440 770 2478 820 2520 880 2552 960 2551 1030 2552 1060 2545 1075 2524 1092L1076 1670Z" fill="url(#gBody)"/>
        <path d="M924 1300 2367 732C2400 728 2440 770 2478 820 2520 880 2552 960 2551 1030 2552 1060 2545 1075 2524 1092L1076 1670" fill="none" stroke="#2f7f8a" stroke-width="2"/>
        <ellipse cx="1000" cy="1485" rx="200" ry="80" transform="rotate(67.7 1000 1485)" fill="#087b84" stroke="#5f7f84" stroke-width="2"/>
        <g transform="translate(2276 668)">
          <use href="#pinShape"/>
          <path d="M-85 3-73 156C-60 185-20 208 7 210 30 211 85 205 95 152L84-1" fill="none" stroke="#857c18" stroke-width="2.5"/>
          <ellipse rx="85" ry="49" transform="rotate(-3)" fill="#e3da22" stroke="#857c18" stroke-width="2.5"/>
        </g>
        <use class="glow" href="#pinLit" x="2060" y="752"/>
        <use class="glow" href="#pinLit" x="1842" y="838"/>
        <use class="glow" href="#pinLit" x="1626" y="923"/>
        <use class="glow" href="#pinLit" x="1410" y="1010"/>
        <use class="glow" href="#pinLit" x="1194" y="1095"/>
        <ellipse cx="2075" cy="971" rx="63" ry="59" fill="#c8d820" opacity=".35"/>
        <path d="M2074 972 2102 998 2088 1002 2096 1017 2088 1018 2082 1005 2074 1009Z" fill="#eee" stroke="#666" stroke-width="2"/>
        <path d="M2117 1002 2130 1015 2117 1028 2105 1015Z" fill="#fff" stroke="#2f8fc8" stroke-width="2"/>
        <path d="M1722 1198 1720 1140" stroke="#0a18c0" stroke-width="6"/>
        <path d="M1719 1128 1713 1152 1725 1152Z" fill="#0a18c0"/>
        <path d="M1722 1198 1790 1172" stroke="#1fd62a" stroke-width="4"/>
        <path d="M1807 1166 1782 1164 1787 1182Z" fill="#1fd62a"/>
        <path d="M1722 1198 1762 1238" stroke="#c02828" stroke-width="5"/>
        <path d="M1770 1247 1750 1236 1762 1224Z" fill="#c02828"/>
        <circle cx="1722" cy="1198" r="10" fill="#e8d820"/>
        <text class="axis az" x="1705" y="1120">Z</text>
        <text class="axis ay" x="1817" y="1167">Y</text>
        <text class="axis ax" x="1773" y="1271">X</text>
      </svg>
      <div class="tree">
        <div class="treegrip"><i></i></div>
        <div class="row in0"><span class="pill root"><svg class="tico"><use href="#f-par"/></svg><svg class="lock" viewBox="0 0 26 30"><path d="M7 14V7C7 2 14 2 14 7" fill="none" stroke="#8a5a18" stroke-width="2"/><rect x="3" y="13" width="20" height="16" fill="#f2c65a" stroke="#8a5a18" stroke-width="2"/></svg>零件1</span></div>
        <div class="row in2"><i class="chk on"></i><span class="pill"><svg class="tico"><use href="#t-base"/></svg>Base</span></div>
        <div class="row in3"><span class="pill"><svg class="tico"><use href="#t-mat"/></svg>材料 (无)</span></div>
        <div class="row in1"><i class="tog plus"></i><i class="chk"></i><span class="pill dim"><svg class="tico"><use href="#t-plane"/></svg>基本参考平面</span></div>
        <div class="row in1"><i class="tog"></i><i class="chk on"></i><span class="pill"><svg class="tico"><use href="#t-body"/></svg>设计体</span></div>
        <div class="row in4"><i class="chk on"></i><span class="pill p2"><svg class="tico"><use href="#t-body1"/></svg>设计体_1</span></div>
        <div class="row in1"><i class="tog"></i><span class="seqbar"><svg class="seqic" viewBox="0 0 16 26"><path d="M8 0V26M3 5 8 11 13 5M3 18 8 24 13 18" fill="none" stroke="#fff" stroke-width="3"/></svg><b>顺序建模</b><i class="seqtri"></i></span></div>
        <div class="row in5"><span class="pill feat"><svg class="tico"><use href="#t-feat"/></svg><b>拉伸 1</b></span></div>
        <div class="row in5"><span class="pill feat"><svg class="tico"><use href="#t-feat"/></svg><b>拉伸 2</b></span></div>
        <div class="row in5"><span class="pill feat sel"><svg class="tico"><use href="#t-pat"/></svg><b>阵列 1</b></span></div>
      </div>
    </div>
    <div class="prompt">
      <svg class="pmic"><use href="#b-prompt"/></svg>
      <span class="pmlab">提示条</span>
      <div class="pmtext">选择几何元素或特征以进行编辑，或单击“实体”命令以创建 3D 特征。</div>
    </div>
  </div>
</main>

<footer class="status">
  <span class="st1">阵列 1</span>
  <span class="st2">选择了 0 项</span>
  <div class="cmd">查找命令</div>
  <div class="stools">
    <svg class="sti"><use href="#b-arrow"/></svg>
    <svg class="sti"><use href="#b-zoomarea"/></svg>
    <svg class="sti"><use href="#b-zoom"/></svg>
    <svg class="sti"><use href="#b-fit"/></svg>
    <svg class="sti"><use href="#b-shade"/></svg>
    <svg class="sti"><use href="#o-spin"/></svg>
    <svg class="sti"><use href="#o-cube"/></svg>
    <svg class="sti"><use href="#b-box"/></svg>
    <svg class="sti"><use href="#b-tile"/></svg>
    <svg class="sti"><use href="#b-minus"/></svg>
    <div class="zoomline"><i></i></div>
  </div>
</footer>

<div class="taskbar">
  <div class="search">入你要搜索的内容</div>
  <div class="tk u"><svg class="tki"><use href="#w-folder"/></svg></div>
  <div class="tk u"><svg class="tki"><use href="#w-mon"/></svg></div>
  <div class="tk u on"><svg class="tki"><use href="#w-snow"/></svg></div>
  <div class="tk u"><svg class="tki"><use href="#w-chrome"/></svg></div>
  <div class="tray">
    <svg class="trw"><use href="#w-weather"/></svg>
    <span class="temp">5°C 少云</span>
    <svg class="caret" viewBox="0 0 26 20"><path d="M2 18 13 3 24 18" fill="none" stroke="#eee" stroke-width="2.4"/></svg>
    <svg class="tri-ic m36"><use href="#w-bat"/></svg>
    <svg class="tri-ic m32"><use href="#w-wifi"/></svg>
    <svg class="tri-ic m43"><use href="#w-vol"/></svg>
    <svg class="tri-ic"><use href="#w-pen"/></svg>
  </div>
</div>
</body>
</html>
```
FILE: styles.css
```css
* { box-sizing: border-box; }
html, body { margin: 0; padding: 0; width: 3456px; height: 2160px; overflow: hidden; background: #fff; }
body { display: flex; flex-direction: column; font-family: "Noto Sans CJK SC", "Liberation Sans", sans-serif; color: #555; font-size: 25px; }
i { display: block; font-style: normal; flex: none; }
svg { flex: none; display: block; }
.sprite { width: 0; height: 0; overflow: hidden; }

/* title bar */
.titlebar { height: 52px; flex: none; display: flex; align-items: center; padding-left: 37px; position: relative; }
.q { height: 32px; }
.q33 { width: 33px; }
.q30 { width: 30px; margin-left: 5px; }
.sp15 { margin-left: 15px; }
.sp17 { margin-left: 17px; }
.sp2 { margin-left: 2px; }
.tri { width: 0; height: 0; border-left: 5px solid transparent; border-right: 5px solid transparent; border-top: 9px solid #777; margin-left: 16px; }
.tri.t4 { margin-left: 4px; }
.tri.light { border-top-color: #c4c4c4; margin-left: 15px; }
.tri.big { border-left-width: 8px; border-right-width: 8px; border-top-width: 13px; margin-left: 0; }
.tri.blue { border-top-color: #2a5a9c; margin-left: 4px; }
.qsep { width: 2px; height: 44px; background: #e6e6e6; margin: 0 12px; }
.qsep.q14 { margin-left: 14px; }
.qsep.q13 { margin-left: 13px; }
.custom { width: 12px; height: 18px; margin-left: 42px; background: linear-gradient(#666 0 3px, transparent 3px 6px, #666 6px 7px, transparent 7px); clip-path: polygon(0 0, 100% 0, 100% 35%, 50% 100%, 0 35%); }
.apptitle { position: absolute; left: 0; right: 0; top: 8px; text-align: center; font-size: 26px; line-height: 36px; color: #555; padding-right: 4px; }

/* menu */
.menubar { height: 48px; flex: none; display: flex; align-items: center; gap: 64px; border-bottom: 3px solid #e4e4e4; overflow: hidden; font-size: 25px; color: #444; padding-bottom: 3px; }
.menubar span { flex: none; }
.menubar .clip { margin-left: -20px; }
.menubar .pmi { font-family: "Liberation Mono", monospace; font-size: 20px; width: 37px; letter-spacing: -1px; }

/* ribbon */
.ribbon { height: 185px; flex: none; display: flex; border-bottom: 3px solid #e4e4e4; overflow: hidden; padding-top: 12px; }
.group { flex: none; height: 155px; border-right: 2px solid #ececec; }
.g0 { width: 36px; }
.g1 { width: 87px; padding-left: 22px; }
.g2 { width: 312px; padding-left: 9px; }
.g3 { width: 842px; padding-left: 11px; }
.g4 { width: 207px; padding-left: 11px; }
.g5 { width: 414px; padding-left: 11px; }
.g6 { width: 370px; padding-left: 3px; }
.g7 { width: 377px; padding-left: 7px; }
.g8 { width: 541px; padding-left: 26px; }
.gbody { height: 126px; display: flex; padding-top: 3px; }
.glabel { height: 30px; line-height: 30px; text-align: center; color: #8a8a8a; font-size: 25px; position: relative; }
.g1 .glabel { margin-left: -22px; }
.g2 .glabel { margin-left: -9px; }
.g3 .glabel, .g4 .glabel, .g5 .glabel { margin-left: -11px; }
.g6 .glabel { margin-left: -3px; }
.g7 .glabel { margin-left: -7px; }
.g8 .glabel { margin-left: -26px; }

.btn { flex: none; display: flex; flex-direction: column; align-items: center; color: #555; }
.btn span { margin-top: 20px; line-height: 30px; height: 30px; white-space: nowrap; }
.btn span.two { line-height: 22px; height: 44px; font-size: 24px; text-align: center; margin-top: 22px; }
.lg { width: 64px; height: 60px; }
.lgw { width: 66px; height: 60px; }
.drop { width: 0; height: 0; border-left: 4px solid transparent; border-right: 4px solid transparent; border-top: 7px solid #888; margin-top: 10px; }
.w80 { width: 80px; } .w84 { width: 84px; } .w90 { width: 90px; } .w92 { width: 92px; } .w94 { width: 94px; } .w96 { width: 96px; } .w114 { width: 114px; } .w120 { width: 120px; } .w130 { width: 130px; }
.ml1 { margin-left: 1px; } .ml10 { margin-left: 10px; } .ml11 { margin-left: 11px; } .ml16 { margin-left: 16px; } .ml17 { margin-left: 17px; } .ml21 { margin-left: 21px; } .ml41 { margin-left: 41px; }

.sm { width: 32px; height: 32px; }
.col { flex: none; display: flex; flex-direction: column; gap: 13px; margin-top: -1px; width: 32px; }
.clipcol { margin-left: -16px; }
.srow { display: flex; align-items: center; width: 32px; height: 32px; }
.srow .tri { margin-left: 4px; border-left-width: 4px; border-right-width: 4px; border-top-width: 7px; border-top-color: #888; }
.srow .tri.far { margin-left: 15px; }
.hi { background: #c5d9f3; box-shadow: 0 0 0 8px #c5d9f3; }
.sepcol { position: relative; margin-left: 28px; }
.sepcol::before { content: ""; position: absolute; left: -14px; top: -5px; height: 138px; width: 2px; background: #ececec; }
.tcol { flex: none; display: flex; flex-direction: column; gap: 3px; margin-top: -4px; }
.trow { display: flex; align-items: center; gap: 4px; height: 32px; color: #555; white-space: nowrap; }
.trow.off { color: #bdbdbd; }

.vgrid { flex: none; display: grid; grid-template-columns: 42px 42px 42px; grid-auto-rows: 42px; column-gap: 26px; row-gap: 22px; align-content: start; }
.vi { width: 42px; height: 42px; }
.vsel { box-shadow: 0 0 0 3px #fff, 0 0 0 11px #c9daf3; }
.stylecol { flex: none; width: 307px; margin-left: 19px; padding-left: 5px; border-left: 2px solid #ececec; height: 135px; margin-top: -3px; }
.stylehead { display: flex; align-items: center; gap: 8px; height: 32px; margin-top: -3px; padding-left: 8px; }
.stylebox { width: 300px; height: 46px; margin-top: 3px; border: 2px solid #bdbdbd; display: flex; align-items: center; justify-content: flex-end; padding-right: 8px; }

/* mini toolbar row */
.minirow { height: 47px; flex: none; padding: 0 0 5px 976px; }
.mini { width: 996px; height: 42px; display: flex; align-items: center; border: 2px solid #ececec; border-top: 0; padding-left: 8px; gap: 21px; }
.grip { width: 6px; height: 28px; background: repeating-linear-gradient(#cfcfcf 0 2px, transparent 2px 5px); margin-right: -1px; }
.mi { display: flex; align-items: center; gap: 4px; white-space: nowrap; color: #555; }
.mi.off { color: #bbb; }
.mic { width: 30px; height: 32px; }

/* main */
.main { flex: 1; min-height: 0; display: flex; }
.panel { width: 168px; flex: none; display: flex; flex-direction: column; overflow: hidden; background: #fff; }
.phead { height: 29px; flex: none; display: flex; align-items: center; padding-left: 52px; gap: 21px; width: 158px; }
.pdown { width: 20px; height: 22px; background: linear-gradient(#333 0 5px, transparent 5px 7px, #333 7px); clip-path: polygon(0 0, 100% 0, 100% 35%, 50% 100%, 0 35%); }
.ppin { width: 14px; height: 28px; margin-left: -5px; }
.px { width: 18px; height: 18px; }
.ptools { height: 48px; flex: none; margin-top: 4px; width: 158px; display: flex; align-items: center; background: #f2f2f2; padding-left: 4px; border-bottom: 3px solid #e4e4e4; }
.pic { width: 34px; height: 34px; }
.pvsep { width: 2px; height: 34px; background: #dcdcdc; margin: 0 10px; }
.arrow-l { margin-left: 8px; width: 0; height: 0; border-top: 10px solid transparent; border-bottom: 10px solid transparent; border-right: 10px solid #bcc8d8; }
.arrow-r { margin-left: 19px; width: 0; height: 0; border-top: 12px solid transparent; border-bottom: 12px solid transparent; border-left: 12px solid #2a5a9c; }
.ptools2 { height: 60px; flex: none; width: 158px; display: flex; align-items: center; gap: 6px; margin-left: -1px; padding-top: 6px; }
.pbtn { height: 36px; width: 46px; border: 2px solid #ccc; background: #f3f3f3; display: flex; align-items: center; justify-content: center; flex: none; }
.pbtn.cut { width: 30px; border-left: 0; justify-content: flex-start; }
.pbtn.wide { width: 66px; }
.pic2 { width: 30px; height: 30px; }
.pdrop { height: 42px; flex: none; width: 158px; margin-top: 10px; background: #e6e6e6; display: flex; align-items: center; justify-content: flex-end; padding-right: 10px; }
.chev { width: 18px; height: 11px; }
.plist { flex: 1; width: 158px; margin-top: 6px; border: 2px solid #bdbdbd; border-left: 0; padding-top: 2px; overflow: hidden; font-family: "Liberation Mono", "Noto Sans CJK SC", monospace; font-size: 22px; color: #222; }
.fileitem { height: 33px; line-height: 33px; white-space: nowrap; margin-left: -14px; }
.fileitem.hot { background: #f2f2f2; }
.fileitem.asm { margin-top: 76px; font-size: 18px; margin-left: -26px; }

/* workspace */
.work { flex: 1; min-width: 0; display: flex; flex-direction: column; }
.tabs { height: 56px; flex: none; display: flex; border-bottom: 3px solid #4f6e94; position: relative; }
.tab { display: flex; align-items: center; height: 53px; color: #888; flex: none; white-space: nowrap; }
.tab:first-child { width: 277px; padding-left: 37px; gap: 9px; border-left: 2px solid #ddd; margin-left: 6px; }
.tab.active { width: 208px; border: 1px solid #c8c8c8; border-top: 4px solid #3f5f8c; border-bottom: 0; padding-left: 36px; gap: 11px; color: #5b7fb5; background: #fff; }
.tic { width: 30px; height: 32px; }
.tx { width: 18px; height: 20px; margin-left: 38px; }

.view { flex: 1; min-height: 0; position: relative; background: linear-gradient(#a9d4f9 0, #cfe6fb 50%, #eaf4fe 80%, #fff 100%); overflow: hidden; }
.scene { position: absolute; left: 0; top: 0; width: 3288px; height: 1600px; }
.glow { filter: drop-shadow(0 0 7px rgba(255, 255, 255, .9)); }
.soft { filter: blur(2px); opacity: .75; }
.axis { font-family: "Liberation Sans", sans-serif; font-size: 30px; }
.az { fill: #2a56d8; } .ay { fill: #2bdc6a; } .ax { fill: #b84040; }
.glyph { font-family: "Liberation Serif", serif; }
.gs { font-size: 14px; font-weight: 700; fill: #1c2f6e; }
.gb { font-size: 24px; font-weight: 700; fill: #1e2a96; }
.bi { font-style: italic; }
.gl { font-size: 36px; font-weight: 700; fill: #1c3b7a; }
.gm { font-size: 28px; font-weight: 700; fill: #1c3b7a; }

/* tree */
.tree { position: absolute; left: 2px; top: 0; width: 530px; }
.treegrip { height: 18px; background: linear-gradient(#f4f5f6, #bcc2c8); border-left: 1px solid #aab; display: flex; justify-content: center; align-items: center; }
.treegrip i { width: 82px; height: 5px; background: repeating-linear-gradient(90deg, #667 0 3px, transparent 3px 8px); }
.row { height: 32px; display: flex; align-items: center; font-size: 27px; line-height: 26px; }
.in0 { padding-left: 8px; }
.in1 { padding-left: 32px; }
.in2 { padding-left: 65px; }
.in3 { padding-left: 104px; }
.in4 { padding-left: 114px; }
.in5 { padding-left: 154px; }
.tog { width: 18px; height: 18px; border: 1px solid #8fa2b4; background: linear-gradient(#fff, #d8dfe6); position: relative; margin-right: 15px; }
.tog::before { content: ""; position: absolute; left: 3px; right: 3px; top: 6px; height: 3px; background: #222; }
.tog.plus::after { content: ""; position: absolute; top: 3px; bottom: 3px; left: 6px; width: 3px; background: #222; }
.chk { width: 27px; height: 25px; border: 2px solid #40566e; background: #fff; position: relative; margin-right: 13px; }
.chk.on::after { content: ""; position: absolute; left: 7px; top: 2px; width: 9px; height: 14px; border-right: 4px solid #10295c; border-bottom: 4px solid #10295c; transform: rotate(38deg); }
.pill { display: inline-flex; align-items: center; height: 26px; gap: 5px; padding: 0 8px 0 3px; background: linear-gradient(#fff, #dce6ee); border: 1px solid #c4d4e2; color: #222; white-space: nowrap; }
.pill.root { padding-right: 12px; color: #333; }
.pill.dim { color: #9a9a9a; padding-right: 8px; }
.pill.p2 { padding-right: 6px; gap: 8px; }
.pill.feat { width: 134px; gap: 8px; padding-left: 2px; color: #000; font-size: 28px; }
.pill.feat b { font-weight: 700; }
.pill.sel { background: linear-gradient(#f5ab3c, #ef8c14); border-color: #ef9c2c; }
.tico { width: 30px; height: 24px; }
.lock { width: 22px; height: 26px; margin-left: 5px; margin-right: 4px; }
.seqbar { width: 389px; height: 28px; display: flex; align-items: center; background: linear-gradient(#f9b53c, #fbe05a 45%, #f6a92a); position: relative; color: #1a1200; padding-left: 15px; font-size: 29px; }
.seqbar b { margin-left: 11px; font-weight: 700; }
.seqic { width: 16px; height: 26px; }
.seqtri { margin-left: auto; margin-right: 24px; width: 0; height: 0; border-top: 11px solid transparent; border-bottom: 11px solid transparent; border-right: 34px solid #fff; }

/* prompt */
.prompt { height: 49px; flex: none; display: flex; align-items: center; background: #fff; border-top: 2px solid #d4d4d8; padding-top: 4px; padding-left: 13px; }
.pmic { width: 40px; height: 24px; }
.pmlab { margin-left: 12px; color: #4a6fb0; width: 89px; font-size: 26px; white-space: nowrap; }
.pmtext { flex: 1; height: 100%; line-height: 42px; color: #111; border-left: 2px solid #c8c8c8; border-top: 3px solid #c8c8c8; padding-left: 2px; white-space: nowrap; font-size: 26px; letter-spacing: .7px; }

/* status */
.status { height: 43px; flex: none; background: #2a5a9e; border-top: 1px solid #9cc0e8; display: flex; align-items: center; color: #e8eef8; position: relative; padding-left: 777px; }
.st1 { width: 1389px; flex: none; white-space: nowrap; }
.st2 { width: 408px; flex: none; white-space: nowrap; font-size: 27px; }
.cmd { width: 299px; height: 38px; margin-top: 4px; background: #fff; color: #bdbdbd; line-height: 36px; padding-left: 2px; flex: none; }
.stools { flex: 1; min-width: 0; display: flex; align-items: center; gap: 15px; padding-left: 8px; }
.sti { width: 32px; height: 34px; }
.zoomline { flex: 1; height: 3px; background: #dbe6f4; position: relative; margin-left: -8px; margin-right: -4px; }
.zoomline i { position: absolute; right: 8px; top: -15px; width: 24px; height: 32px; background: #c5d5e6; clip-path: polygon(0 0, 100% 0, 100% 70%, 50% 100%, 0 70%); }

/* taskbar */
.taskbar { height: 80px; flex: none; background: #1c1c1e; display: flex; position: relative; }
.search { width: 516px; flex: none; background: #f2f2f2; color: #333; font-size: 28px; line-height: 78px; white-space: nowrap; margin-right: 16px; }
.tk { width: 85px; flex: none; margin-right: 19px; display: flex; align-items: center; justify-content: center; position: relative; height: 80px; padding-bottom: 6px; }
.tk.on { width: 93px; background: #3c3c3e; margin-right: 20px; margin-left: -4px; box-shadow: inset -3px 0 #555; }
.tk.u::after { content: ""; position: absolute; left: 0; right: 0; bottom: 0; height: 5px; background: #f6b8aa; }
.tki { width: 46px; height: 46px; }
.tray { margin-left: auto; display: flex; align-items: center; padding-right: 18px; color: #eee; padding-bottom: 4px; }
.trw { width: 48px; height: 54px; margin-right: 21px; }
.temp { font-size: 29px; white-space: nowrap; margin-right: 46px; word-spacing: 8px; }
.caret { width: 24px; height: 20px; margin-right: 41px; }
.tri-ic { width: 34px; height: 36px; }
.m36 { margin-right: 36px; }
.m32 { margin-right: 32px; }
.m43 { margin-right: 43px; }
```
